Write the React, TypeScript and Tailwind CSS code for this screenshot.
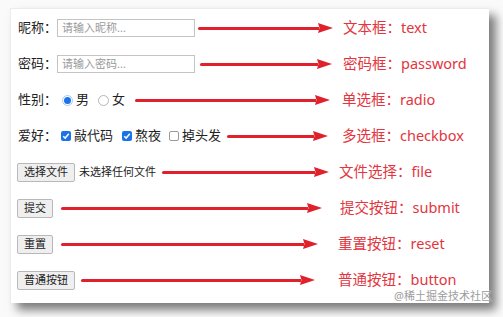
import React from "react";

const RED = "#e0202a";

function Arrow({ ml, mr }: { ml: string; mr: string }) {
  return (
    <div className={`flex-1 flex items-center ${ml} ${mr}`}>
      <div className="flex-1 h-[3px] bg-[#e0202a] rounded-l-full" />
      <svg width="15" height="10" viewBox="0 0 15 10" className="-ml-[1px] shrink-0">
        <polygon points="0,0 15,5 0,10 1.5,5" fill={RED} />
      </svg>
    </div>
  );
}

function Radio({ checked }: { checked?: boolean }) {
  return checked ? (
    <span className="w-[11px] h-[11px] rounded-full border border-[#a9c9f3] bg-white flex items-center justify-center shrink-0">
      <span className="w-[7px] h-[7px] rounded-full bg-[#1a73e8]" />
    </span>
  ) : (
    <span className="block w-[11px] h-[11px] rounded-full border border-[#b5b5b5] bg-white shrink-0" />
  );
}

function Check({ checked }: { checked?: boolean }) {
  return checked ? (
    <span className="w-[10px] h-[10px] rounded-[2px] bg-[#1a73e8] flex items-center justify-center shrink-0">
      <svg width="8" height="8" viewBox="0 0 8 8">
        <path d="M1.2 4.2 L3.2 6.1 L6.8 1.8" stroke="white" strokeWidth="1.5" fill="none" />
      </svg>
    </span>
  ) : (
    <span className="block w-[10px] h-[10px] rounded-[2px] border border-[#9a9a9a] bg-white shrink-0" />
  );
}

function Label({ children }: { children: React.ReactNode }) {
  return (
    <span className="w-[39px] shrink-0 whitespace-nowrap text-[13px] text-[#222]">{children}</span>
  );
}

function Btn({ children }: { children: React.ReactNode }) {
  return (
    <span className="h-[19px] px-[6px] flex items-center border border-[#b8b8b8] bg-[#efefef] rounded-[2px] text-[11px] text-[#222] whitespace-nowrap shrink-0">
      {children}
    </span>
  );
}

function Input({ ph }: { ph: string }) {
  return (
    <span className="w-[138px] h-[18px] border border-[#c4c4c4] bg-white flex items-center pl-[4px] text-[11px] text-[#9a9a9a] shrink-0">
      {ph}
    </span>
  );
}

function Note({ pl, children }: { pl: string; children: React.ReactNode }) {
  return (
    <div className={`w-[151px] shrink-0 whitespace-nowrap text-[14.5px] text-[#e33540] ${pl}`}>{children}</div>
  );
}

export default function App() {
  return (
    <div
      className="w-[503px] h-[317px] bg-[#fafafa] overflow-hidden pt-[8px] pl-[10px]"
      style={{ fontFamily: '"Noto Sans", "Noto Sans CJK SC", sans-serif' }}
    >
      <div className="relative w-[479px] h-[295px] bg-white border-l border-t border-[#ececec] shadow-[7px_7px_9px_rgba(0,0,0,0.5)] pt-[1px] pl-[6px] flex flex-col">
        <div className="flex items-center h-[36px] pl-[1px]">
          <Label>昵称：</Label>
          <Input ph="请输入昵称..." />
          <Arrow ml="ml-[3px]" mr="mr-[5px]" />
          <Note pl="pl-[5px]">文本框：text</Note>
        </div>
        <div className="flex items-center h-[36px] pl-[1px]">
          <Label>密码：</Label>
          <Input ph="请输入密码..." />
          <Arrow ml="ml-[5px]" mr="mr-[6px]" />
          <Note pl="pl-[5px]">密码框：password</Note>
        </div>
        <div className="flex items-center h-[36px] pl-[1px] text-[13px] text-[#222]">
          <Label>性别：</Label>
          <span className="ml-[5px] flex"><Radio checked /></span>
          <span className="ml-[3px]">男</span>
          <span className="ml-[9px] flex"><Radio /></span>
          <span className="ml-[3px]">女</span>
          <Arrow ml="ml-[10px]" mr="mr-[8px]" />
          <Note pl="pl-[4px]">单选框：radio</Note>
        </div>
        <div className="flex items-center h-[36px] pl-[1px] text-[13px] text-[#222]">
          <Label>爱好：</Label>
          <span className="ml-[4px] flex"><Check checked /></span>
          <span className="ml-[3px]">敲代码</span>
          <span className="ml-[9px] flex"><Check checked /></span>
          <span className="ml-[3px]">熬夜</span>
          <span className="ml-[8px] flex"><Check /></span>
          <span className="ml-[3px]">掉头发</span>
          <Arrow ml="ml-[6px]" mr="mr-[10px]" />
          <Note pl="pl-[4px]">多选框：checkbox</Note>
        </div>
        <div className="flex items-center h-[36px]">
          <Btn>选择文件</Btn>
          <span className="ml-[4px] text-[11px] text-[#222] whitespace-nowrap">未选择任何文件</span>
          <Arrow ml="ml-[6px]" mr="mr-[9px]" />
          <Note pl="pl-[1px]">文件选择：file</Note>
        </div>
        <div className="flex items-center h-[36px]">
          <Btn>提交</Btn>
          <Arrow ml="ml-[8px]" mr="mr-[16px]" />
          <Note pl="pl-[2px]">提交按钮：submit</Note>
        </div>
        <div className="flex items-center h-[36px]">
          <Btn>重置</Btn>
          <Arrow ml="ml-[8px]" mr="mr-[20px]" />
          <Note pl="pl-0">重置按钮：reset</Note>
        </div>
        <div className="flex items-center h-[36px]">
          <Btn>普通按钮</Btn>
          <Arrow ml="ml-[6px]" mr="mr-[23px]" />
          <Note pl="pl-0">普通按钮：button</Note>
        </div>
        <span className="absolute right-[-3px] bottom-[-1px] text-[11px] text-[#9c9c9c] whitespace-nowrap [text-shadow:0_0_2px_white]">
          @稀土掘金技术社区
        </span>
      </div>
    </div>
  );
}
